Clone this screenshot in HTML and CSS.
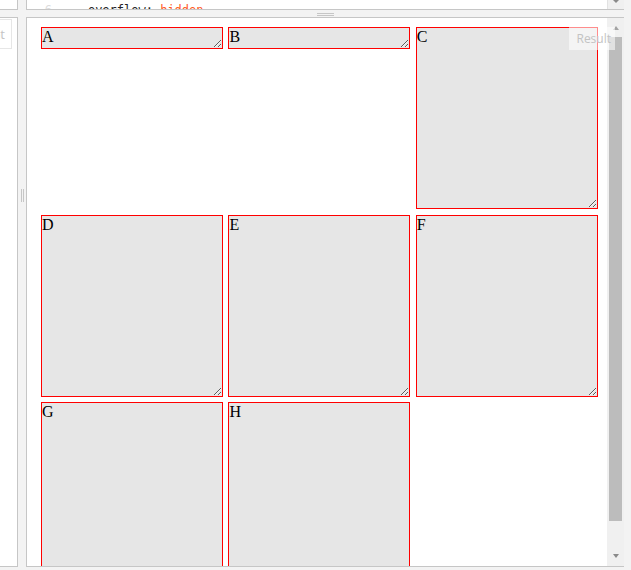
FILE: index.html
```html
<!DOCTYPE html>
<html lang="en">
<head>
  <meta charset="UTF-8">
  <title>Resizable boxes</title>
  <link rel="stylesheet" href="styles.css">
</head>
<body>
  <div class="app">
    <div class="col col-left">
      <div class="pane pane-top"></div>
      <div class="pane pane-main">
        <span class="pane-label label-left">JavaScript</span>
      </div>
    </div>

    <div class="gutter-v"><span class="grip-v"></span></div>

    <div class="col col-right">
      <div class="pane pane-top editor">
        <div class="code">
          <div class="line"><span class="ln">6</span><span class="src">    <span class="prop">overflow</span>: <span class="val">hidden</span></span></div>
        </div>
        <div class="editor-scroll"><span class="arrow-down"></span></div>
      </div>

      <div class="gutter-h"><span class="grip-h"></span></div>

      <div class="pane pane-main result">
        <div class="frame">
          <div class="boxes">
            <div class="box box-short">A</div>
            <div class="box box-short">B</div>
            <div class="box">C</div>
            <div class="box">D</div>
            <div class="box">E</div>
            <div class="box">F</div>
            <div class="box">G</div>
            <div class="box">H</div>
          </div>
        </div>
        <div class="vscroll">
          <div class="sb-btn sb-up"><span class="arrow-up"></span></div>
          <div class="sb-thumb"></div>
          <div class="sb-space"></div>
          <div class="sb-btn sb-down"><span class="arrow-down"></span></div>
        </div>
        <span class="pane-label label-result">Result</span>
      </div>
    </div>
  </div>
</body>
</html>
```

FILE: styles.css
```css
body { margin: 0; background: #f3f3f3; font-family: "Open Sans", Arial, sans-serif; height: 570px; overflow: hidden; }
.app { display: flex; height: 567px; }
.col { display: flex; flex-direction: column; }
.col-left { width: 18px; gap: 7px; }
.col-right { width: 598px; }

.pane { background: #fff; border: 0 solid #c6c6c6; box-sizing: border-box; }
.pane-top { height: 10px; flex: none; border-bottom-width: 1px; }
.col-left .pane { border-right-width: 1px; }
.col-right .pane { border-left-width: 1px; }
.pane-main {
  flex: 1;
  border-top-width: 1px;
  border-bottom-width: 1px;
  position: relative;
  overflow: hidden;
}

/* drag handles */
.gutter-v { width: 8px; padding-left: 3px; box-sizing: border-box; }
.grip-v {
  display: block;
  width: 1px;
  height: 13px;
  margin-top: 189px;
  border-left: 1px solid #c6c6c6;
  border-right: 1px solid #c6c6c6;
}
.gutter-h { height: 7px; flex: none; display: flex; justify-content: center; padding-top: 3px; box-sizing: border-box; }
.grip-h {
  width: 17px;
  height: 1px;
  border-top: 1px solid #c6c6c6;
  border-bottom: 1px solid #c6c6c6;
}

/* code editor strip */
.editor { display: flex; overflow: hidden; }
.code { flex: 1; overflow: hidden; }
.line {
  display: flex;
  margin-top: 2px;
  font: 12px/17px "DejaVu Sans Mono", monospace;
  white-space: pre;
  color: #222;
}
.ln { width: 28px; padding-right: 3px; box-sizing: border-box; text-align: right; color: #dcdcdc; }
.src { padding-left: 4px; }
.val { color: #ff5a1f; }
.editor-scroll {
  width: 17px;
  background: #f0f0f0;
  border-left: 1px solid #e2e2e2;
  box-sizing: border-box;
  display: flex;
  justify-content: center;
}

/* result frame */
.result { display: flex; }
.frame { flex: 1; padding: 9px 0 0 14px; overflow: hidden; }
.boxes {
  display: grid;
  grid-template-columns: repeat(3, 182px);
  column-gap: 5.4px;
  row-gap: 5.6px;
  align-items: start;
}
.box {
  height: 180px;
  border: 1px solid #f00;
  background: #e6e6e6;
  resize: both;
  overflow: hidden;
  font: 16px "Liberation Serif", "Times New Roman", serif;
  color: #000;
}
.box-short { height: 20px; }

/* fake scrollbar */
.vscroll {
  width: 17px;
  flex: none;
  background: #f0f0f0;
  display: flex;
  flex-direction: column;
  align-items: center;
}
.sb-btn { height: 17px; flex: none; display: flex; justify-content: center; align-items: flex-start; box-sizing: border-box; }
.sb-up { padding-top: 8px; }
.sb-down { padding-top: 5px; }
.sb-thumb { width: 13px; height: 484px; margin-top: 2px; background: #bcbcbc; flex: none; }
.sb-space { flex: 1; }
.arrow-up {
  width: 0;
  height: 0;
  border-left: 3.5px solid transparent;
  border-right: 3.5px solid transparent;
  border-bottom: 4px solid #a3a3a3;
}
.arrow-down {
  width: 0;
  height: 0;
  border-left: 3.5px solid transparent;
  border-right: 3.5px solid transparent;
  border-top: 4px solid #8a8a8a;
}
.editor-scroll .arrow-down { border-top-width: 3px; }

/* floating panel labels */
.pane-label {
  position: absolute;
  font-size: 12px;
  line-height: 15px;
  color: #c3c3c3;
  white-space: nowrap;
}
.label-result {
  top: 9px;
  right: 9px;
  padding: 4px 4px 4px 7px;
  background: rgba(255, 255, 255, .55);
}
.label-left {
  top: 1px;
  right: 5px;
  height: 30px;
  box-sizing: border-box;
  border: 1px solid #e6e6e6;
  padding: 7px 6px;
  font-size: 13px;
}
```
